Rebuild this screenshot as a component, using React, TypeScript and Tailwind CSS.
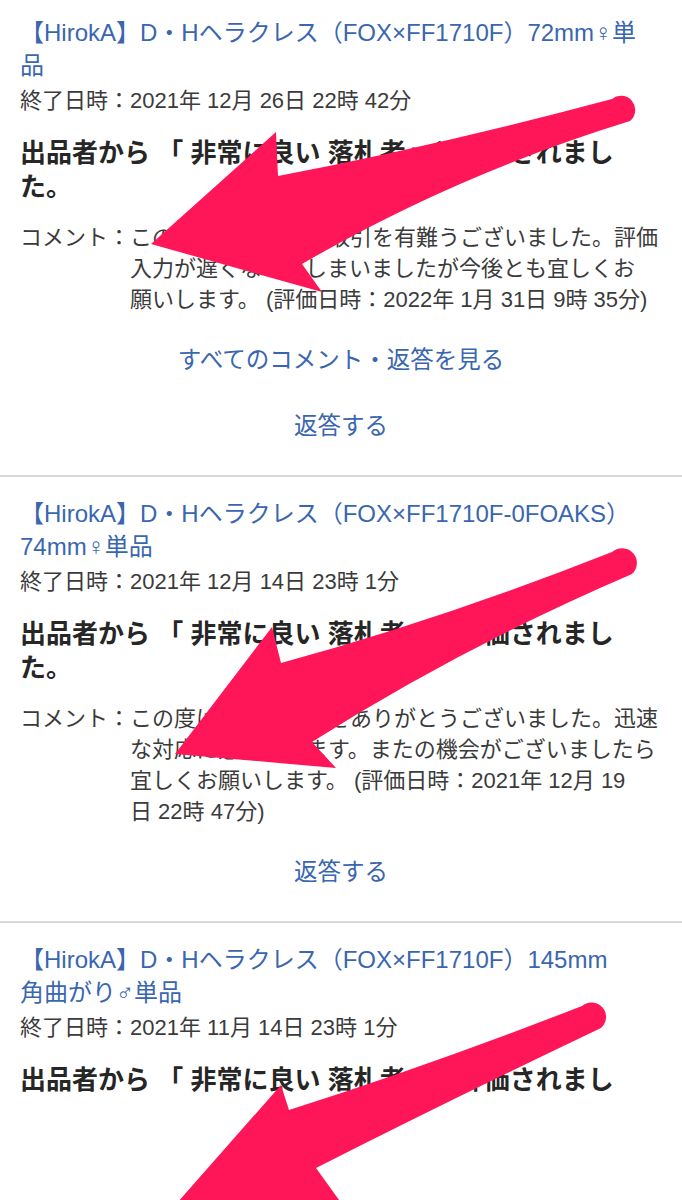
import React from 'react'

type Review = {
  title: React.ReactNode[]
  endedAt: string
  verdict: string[]
  comment?: string[]
  links?: string[]
}

const REVIEWS: Review[] = [
  {
    title: ['【HirokA】D・Hヘラクレス（FOX×FF1710F）72mm♀単', '品'],
    endedAt: '終了日時：2021年 12月 26日 22時 42分',
    verdict: ['出品者から 「 非常に良い 落札者」と評価されまし', 'た。'],
    comment: [
      'この度は気持ち良い取引を有難うございました。評価',
      '入力が遅くなってしまいましたが今後とも宜しくお',
      '願いします。 (評価日時：2022年 1月 31日 9時 35分)',
    ],
    links: ['すべてのコメント・返答を見る', '返答する'],
  },
  {
    title: ['【HirokA】D・Hヘラクレス（FOX×FF1710F-0FOAKS）', '74mm♀単品'],
    endedAt: '終了日時：2021年 12月 14日 23時 1分',
    verdict: ['出品者から 「 非常に良い 落札者」と評価されまし', 'た。'],
    comment: [
      'この度は良いお取引をありがとうございました。迅速',
      'な対応に感謝致します。またの機会がございましたら',
      '宜しくお願いします。 (評価日時：2021年 12月 19',
      '日 22時 47分)',
    ],
    links: ['返答する'],
  },
  {
    title: ['【HirokA】D・Hヘラクレス（FOX×FF1710F）145mm', '角曲がり♂単品'],
    endedAt: '終了日時：2021年 11月 14日 23時 1分',
    verdict: ['出品者から 「 非常に良い 落札者」と評価されまし'],
  },
]

function Lines({ lines }: { lines: React.ReactNode[] }) {
  return (
    <>
      {lines.map((l, i) => (
        <React.Fragment key={i}>
          {i > 0 && <br />}
          {l}
        </React.Fragment>
      ))}
    </>
  )
}

function ReviewItem({ review, first }: { review: Review; first: boolean }) {
  return (
    <section className={`px-5 ${first ? 'pt-4' : 'pt-5'} ${review.links ? 'pb-[15px] border-b-2 border-[#d9d9d9]' : ''}`}>
      <a className="block text-[24px] leading-[33px] text-[#3a66b0]">
        <Lines lines={review.title} />
      </a>
      <p className="mt-1 text-[22px] leading-[30px] text-[#3b3b3b]">{review.endedAt}</p>
      <p className="mt-5 text-[26px] leading-[34px] font-bold text-[#262626]">
        <Lines lines={review.verdict} />
      </p>
      {review.comment && (
        <div className="mt-[18px] flex text-[22px] leading-[31px] text-[#3b3b3b]">
          <span className="w-[110px] shrink-0">コメント：</span>
          <p>
            <Lines lines={review.comment} />
          </p>
        </div>
      )}
      {review.links && (
        <div className="mt-[13px] flex flex-col">
          {review.links.map((l) => (
            <a key={l} className="h-[66px] flex items-center justify-center text-[23.5px] text-[#3a66b0]">
              {l}
            </a>
          ))}
        </div>
      )}
    </section>
  )
}

// pink annotation arrows drawn over the list
function Arrows() {
  return (
    <svg
      className="absolute left-0 top-0 w-[682px] h-[1200px] pointer-events-none"
      viewBox="0 0 682 1200"
    >
      <g fill="#fe1659">
        <path d="M151 244 L276 132 L278 176 Q440 145 612 99 A12 12 0 0 1 630 121 Q455 175 302 264 L322 292 Z" />
        <path d="M175 754 L272 627 L281 663 Q440 620 612 552 A12 12 0 0 1 632 574 Q460 648 312 742 L336 768 Z" />
        <path d="M140 1245 L281 1085 L289 1110 Q430 1065 582 1006 A12 12 0 0 1 601 1028 Q450 1100 316 1168 L352 1218 Z" />
      </g>
    </svg>
  )
}

export default function App() {
  return (
    <div className="relative w-[682px] h-[1200px] overflow-hidden bg-white font-['Liberation_Sans','Noto_Sans_CJK_JP',sans-serif]">
      {REVIEWS.map((r, i) => (
        <ReviewItem key={i} review={r} first={i === 0} />
      ))}
      <Arrows />
    </div>
  )
}
